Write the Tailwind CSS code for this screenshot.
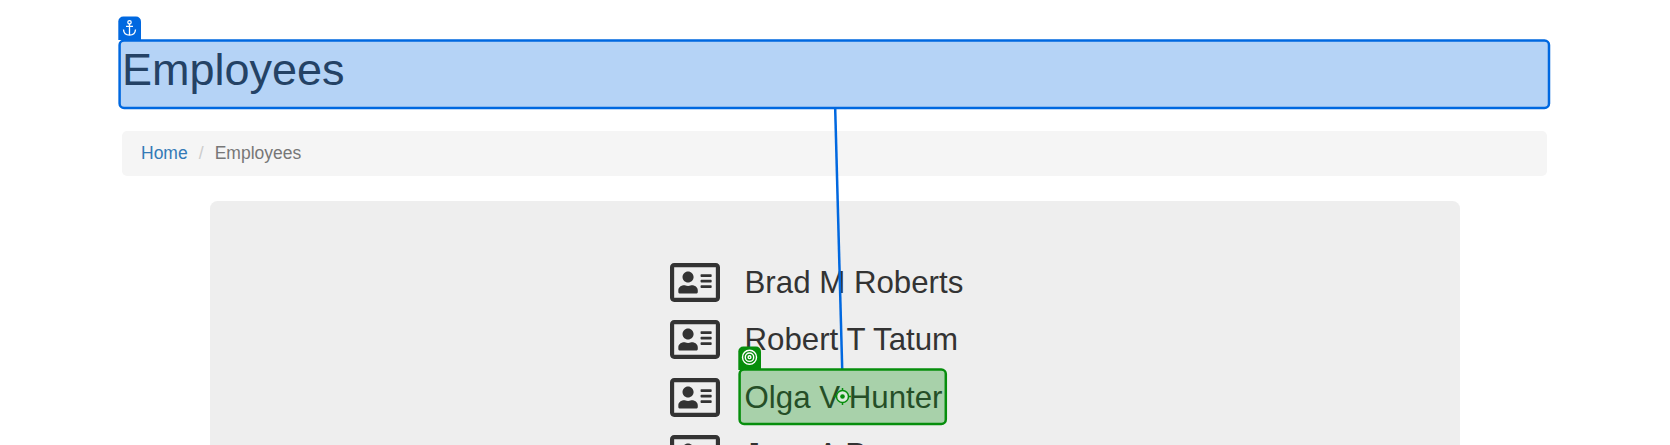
<!DOCTYPE html>
<html lang="en">
<head>
<meta charset="utf-8">
<title>Employees</title>
<script src="https://cdn.jsdelivr.net/npm/@tailwindcss/browser@4"></script>
</head>
<body class="bg-white font-['Liberation_Sans',Arial,sans-serif] text-[#333]">
<svg class="hidden">
  <symbol id="card" viewBox="0 32 576 448"><path fill="currentColor" d="M528 32H48C21.500 32 0 53.500 0 80v352c0 26.500 21.500 48 48 48h480c26.500 0 48-21.500 48-48V80c0-26.500-21.500-48-48-48zm0 400H48V80h480v352zM208 256c35.300 0 64-28.700 64-64s-28.700-64-64-64-64 28.700-64 64 28.700 64 64 64zm-89.600 128h179.200c12.400 0 22.400-8.600 22.400-19.200v-19.200c0-31.800-30.100-57.600-67.200-57.600-10.800 0-18.700 8-44.800 8-26.900 0-33.400-8-44.800-8-37.100 0-67.200 25.800-67.200 57.600v19.200c0 10.600 10 19.200 22.400 19.200zM360 320h112c4.400 0 8-3.600 8-8v-16c0-4.400-3.600-8-8-8H360c-4.400 0-8 3.600-8 8v16c0 4.400 3.600 8 8 8zm0-64h112c4.400 0 8-3.600 8-8v-16c0-4.400-3.600-8-8-8H360c-4.400 0-8 3.600-8 8v16c0 4.400 3.600 8 8 8zm0-64h112c4.400 0 8-3.600 8-8v-16c0-4.400-3.600-8-8-8H360c-4.400 0-8 3.600-8 8v16c0 4.400 3.600 8 8 8z"/></symbol>
</svg>
<div class="relative h-[445px] overflow-hidden pt-[45px]">
  <main class="ml-[122px] w-[1425px]">
    <h1 class="h-[86px] text-[45px] leading-[50px]">Employees</h1>
    <nav class="flex h-[45px] items-center rounded-[5px] bg-[#f5f5f5] pl-[19px] text-[17.5px] text-[#777]">
      <a class="text-[#337ab7]">Home</a><span class="w-[27px] text-center text-[#ccc]">/</span><span>Employees</span>
    </nav>
    <section class="ml-[88px] mt-[25px] h-[400px] w-[1250px] rounded-[7.5px] bg-[#eee] pt-[53.500px] pl-[460px] text-[31.25px]">
      <div class="flex h-[57.400px] items-center"><svg class="mb-[1.4px] h-[39px] w-[50px]"><use href="#card"/></svg><span class="ml-[24.500px]">Brad M Roberts</span></div>
      <div class="flex h-[57.400px] items-center"><svg class="mb-[1.4px] h-[39px] w-[50px]"><use href="#card"/></svg><span class="ml-[24.500px]">Robert T Tatum</span></div>
      <div class="flex h-[57.400px] items-center"><svg class="mb-[1.4px] h-[39px] w-[50px]"><use href="#card"/></svg><span class="ml-[24.500px]">Olga V Hunter</span></div>
      <div class="flex h-[57.400px] items-center"><svg class="mb-[1.4px] h-[39px] w-[50px]"><use href="#card"/></svg><span class="ml-[24.500px]">Jose A Perez</span></div>
    </section>
  </main>
  <svg class="absolute inset-0" width="1670" height="445" fill="none">
    <rect x="119.600" y="40.500" width="1429.400" height="67.500" rx="4.500" fill="#0068e0" fill-opacity=".29" stroke="#0068e0" stroke-width="2.500"/>
    <path d="M118.300 40V21.500a5 5 0 0 1 5-5H136a5 5 0 0 1 5 5V40z" fill="#0068e0"/>
    <g stroke="#fff" stroke-width="1.300"><circle cx="129.500" cy="22.300" r="1.700"/><path d="M129.500 24v11M126 26.300h7M123.500 29.500c.2 3.500 2.500 5.600 6 5.600s5.800-2.100 6-5.600"/></g>
    <path d="M835.200 109L842.200 369" stroke="#0068e0" stroke-width="2.500"/>
    <rect x="739.600" y="369.500" width="206.200" height="54.500" rx="4.500" fill="#068e0c" fill-opacity=".3" stroke="#068e0c" stroke-width="2.500"/>
    <path d="M738.300 370v-18.500a5 5 0 0 1 5-5H756a5 5 0 0 1 5 5V370z" fill="#068e0c"/>
    <g stroke="#fff" stroke-width="1.400"><circle cx="749.500" cy="357.200" r="7"/><circle cx="749.500" cy="357.200" r="4.200"/><circle cx="749.500" cy="357.200" r="1.400"/></g>
    <circle cx="842.500" cy="396.500" r="6" fill="#dcebdc" stroke="#068e0c" stroke-width="1.500"/><circle cx="842.500" cy="396.500" r="2.300" fill="#068e0c"/>
    <path d="M842.500 388v3M842.500 402v3M834 396.500h3M848 396.500h3" stroke="#068e0c" stroke-width="1.500"/>
  </svg>
</div>
</body>
</html>
